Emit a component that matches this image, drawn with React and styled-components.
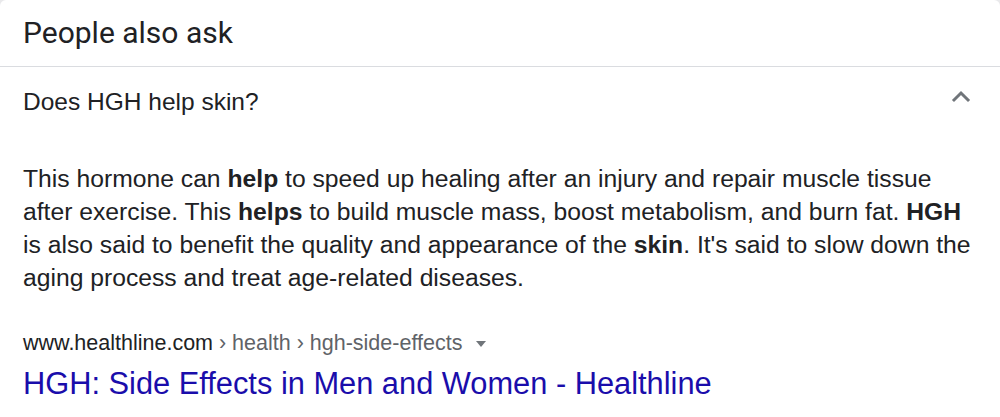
import React from "react";
import styled, { createGlobalStyle } from "styled-components";

const GlobalStyle = createGlobalStyle`
  html, body {
    margin: 0;
    padding: 0;
    background: #e9e9eb;
  }
  * { box-sizing: border-box; }
`;

const Card = styled.section`
  width: 1000px;
  height: 417px;
  background: #ffffff;
  border-radius: 6px 6px 0 0;
  overflow: hidden;
  font-family: "Liberation Sans", Arial, sans-serif;
  color: #202124;
`;

const Header = styled.h2`
  margin: 0;
  padding: 15px 23px 15px;
  font-family: Roboto, "Noto Sans", sans-serif;
  font-weight: 400;
  font-size: 30px;
  line-height: 36px;
  color: #202124;
  border-bottom: 1px solid #dadce0;
`;

const Question = styled.div`
  display: flex;
  align-items: center;
  justify-content: space-between;
  padding: 20px 29px 19px 23px;
  font-size: 24.5px;
  line-height: 30px;
  color: #202124;
`;

const Chevron = styled.svg`
  width: 20px;
  height: 14px;
  flex: none;
  margin-bottom: 12px;
  fill: none;
  stroke: #70757a;
  stroke-width: 3;
  stroke-linecap: square;
`;

const Answer = styled.p`
  margin: 0;
  padding: 26px 20px 0 23px;
  font-size: 24.7px;
  line-height: 33px;
  color: #202124;

  b {
    font-weight: 700;
  }
`;

const Source = styled.div`
  padding: 0 23px;
  margin-top: 35px;
`;

const Crumbs = styled.div`
  display: flex;
  align-items: center;
  font-size: 21.5px;
  line-height: 28px;
  color: #5f6368;
  white-space: nowrap;
`;

const Domain = styled.span`
  color: #202124;
`;

const Caret = styled.span`
  display: inline-block;
  margin-left: 14px;
  margin-top: 2px;
  width: 0;
  height: 0;
  border-left: 5.5px solid transparent;
  border-right: 5.5px solid transparent;
  border-top: 6px solid #70757a;
`;

const TitleLink = styled.a`
  display: block;
  margin-top: 9px;
  font-size: 30.8px;
  line-height: 36px;
  color: #1a0dab;
  text-decoration: none;
  white-space: nowrap;
`;

export default function App() {
  return (
    <>
      <GlobalStyle />
      <Card>
        <Header>People also ask</Header>
        <Question>
          <span>Does HGH help skin?</span>
          <Chevron viewBox="0 0 20 14" aria-hidden="true">
            <polyline points="3,11 10,4 17,11" />
          </Chevron>
        </Question>
        <Answer>
          This hormone can <b>help</b> to speed up healing after an injury and
          repair muscle tissue after exercise. This <b>helps</b> to build muscle
          mass, boost metabolism, and burn fat. <b>HGH</b> is also said to
          benefit the quality and appearance of the <b>skin</b>. It's said to
          slow down the aging process and treat age-related diseases.
        </Answer>
        <Source>
          <Crumbs>
            <Domain>www.healthline.com</Domain>
            &nbsp;› health › hgh-side-effects
            <Caret />
          </Crumbs>
          <TitleLink href="#">
            HGH: Side Effects in Men and Women - Healthline
          </TitleLink>
        </Source>
      </Card>
    </>
  );
}
